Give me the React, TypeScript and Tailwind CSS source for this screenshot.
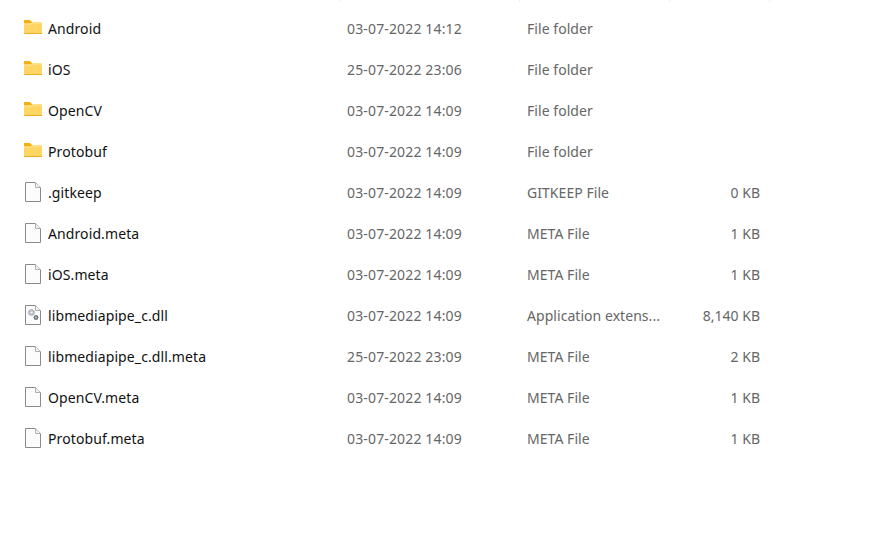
import React from 'react';

type Kind = 'folder' | 'file' | 'dll';

const rows: { name: string; date: string; type: string; size: string; kind: Kind }[] = [
  { name: 'Android', date: '03-07-2022 14:12', type: 'File folder', size: '', kind: 'folder' },
  { name: 'iOS', date: '25-07-2022 23:06', type: 'File folder', size: '', kind: 'folder' },
  { name: 'OpenCV', date: '03-07-2022 14:09', type: 'File folder', size: '', kind: 'folder' },
  { name: 'Protobuf', date: '03-07-2022 14:09', type: 'File folder', size: '', kind: 'folder' },
  { name: '.gitkeep', date: '03-07-2022 14:09', type: 'GITKEEP File', size: '0 KB', kind: 'file' },
  { name: 'Android.meta', date: '03-07-2022 14:09', type: 'META File', size: '1 KB', kind: 'file' },
  { name: 'iOS.meta', date: '03-07-2022 14:09', type: 'META File', size: '1 KB', kind: 'file' },
  { name: 'libmediapipe_c.dll', date: '03-07-2022 14:09', type: 'Application extens...', size: '8,140 KB', kind: 'dll' },
  { name: 'libmediapipe_c.dll.meta', date: '25-07-2022 23:09', type: 'META File', size: '2 KB', kind: 'file' },
  { name: 'OpenCV.meta', date: '03-07-2022 14:09', type: 'META File', size: '1 KB', kind: 'file' },
  { name: 'Protobuf.meta', date: '03-07-2022 14:09', type: 'META File', size: '1 KB', kind: 'file' },
];

const FolderIcon = () => (
  <svg width="20" height="21" viewBox="0 0 20 21">
    <path d="M1 2 H7 L9.5 4.5 H18.5 V8 H1 Z" fill="#f4b010" />
    <path d="M1 5.5 H7.5 L9.5 4.5 H19 V16 H1 Z" fill="#ffd564" />
    <path d="M1 5.5 H7.5 L9.5 4.5 H19 V5.5 H9.8 L7.8 6.5 H1 Z" fill="#ffe9a0" />
    <path d="M1 15 H19 V16 H1 Z" fill="#ecae26" />
  </svg>
);

const FileIcon = ({ gears }: { gears?: boolean }) => (
  <svg width="20" height="21" viewBox="0 0 20 21">
    <path d="M2.5 0.5 H12.5 L17.5 5.5 V19.5 H2.5 Z" fill="#fcfcfc" stroke="#8a8a8a" />
    <path d="M12.5 0.5 V5.5 H17.5" fill="#f2f2f2" stroke="#b0b0b0" />
    {gears && (
      <g>
        <circle cx="8.5" cy="7.5" r="2.4" fill="none" stroke="#a9b2bd" strokeWidth="1.8" />
        <path d="M8.5 3.8 V11.2 M4.8 7.5 H12.2 M5.9 4.9 L11.1 10.1 M11.1 4.9 L5.9 10.1" stroke="#bcc3cc" strokeWidth="1" />
        <circle cx="8.5" cy="7.5" r="1.1" fill="#eef0f2" />
        <circle cx="13" cy="12.5" r="1.6" fill="none" stroke="#5e666f" strokeWidth="1.4" />
        <path d="M13 10 V15 M10.5 12.5 H15.5 M11.2 10.7 L14.8 14.3 M14.8 10.7 L11.2 14.3" stroke="#747c85" strokeWidth="0.8" />
        <circle cx="13" cy="12.5" r="0.7" fill="#e4e6e8" />
      </g>
    )}
  </svg>
);

const App: React.FC = () => {
  return (
    <div className="w-[882px] h-[560px] bg-white overflow-hidden font-['Noto_Sans',sans-serif] text-[14px]">
      <div className="flex h-[2px]">
        <div className="w-[340px] border-r border-[#eeeeee]" />
        <div className="w-[180px] border-r border-[#eeeeee]" />
        <div className="w-[150px] border-r border-[#eeeeee]" />
        <div className="w-[100px] border-r border-[#eeeeee]" />
      </div>
      <div className="pt-[6px]">
        {rows.map((row) => (
          <div key={row.name} className="flex items-center h-[41px]">
            <div className="w-[340px] flex items-center pl-[23px] text-[#111111] tracking-[0.1px]">
              <div className="w-[25px] flex items-center">
                {row.kind === 'folder' ? <FolderIcon /> : <FileIcon gears={row.kind === 'dll'} />}
              </div>
              <span>{row.name}</span>
            </div>
            <div className="w-[180px] pl-[7px] text-[#666666] tracking-[0.15px]">{row.date}</div>
            <div className="w-[150px] pl-[7px] text-[#666666] tracking-[0.05px]">{row.type}</div>
            <div className="w-[100px] pr-[10px] text-right text-[#666666]">{row.size}</div>
          </div>
        ))}
      </div>
    </div>
  );
};

export default App;
